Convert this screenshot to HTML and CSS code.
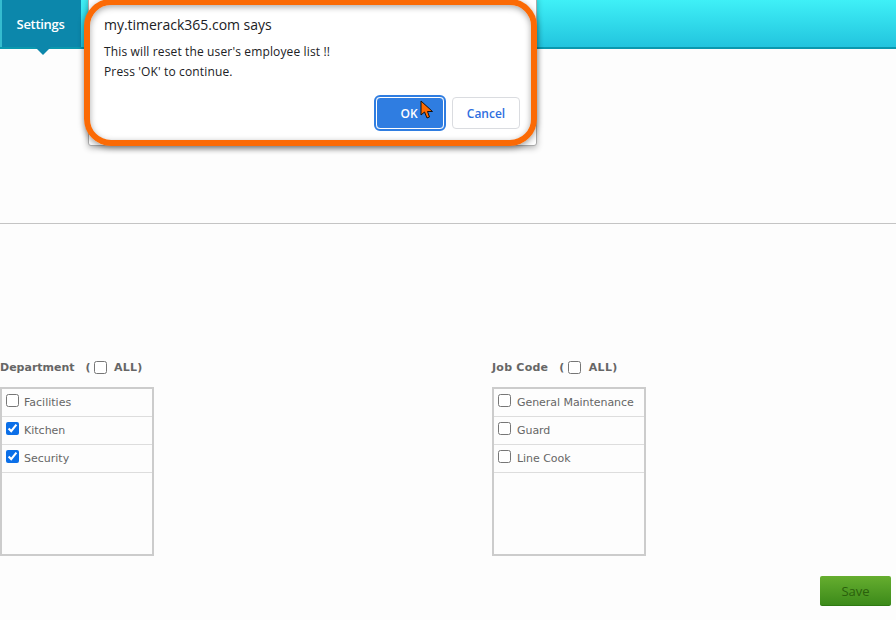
FILE: index.html
```html
<!DOCTYPE html>
<html lang="en">
<head>
<meta charset="utf-8">
<title>Settings</title>
<link rel="stylesheet" href="styles.css">
</head>
<body>
<header class="topbar">
  <div class="tab">Settings</div>
</header>
<main class="content">
  <div class="upper"></div>
  <hr class="rule">
  <div class="columns">
    <section class="col">
      <div class="col-head"><span class="col-name">Department</span><span class="all">(<input type="checkbox" class="cb">ALL)</span></div>
      <ul class="list">
        <li class="row"><input type="checkbox" class="cb"><span>Facilities</span></li>
        <li class="row"><input type="checkbox" class="cb" checked><span>Kitchen</span></li>
        <li class="row"><input type="checkbox" class="cb" checked><span>Security</span></li>
      </ul>
    </section>
    <section class="col">
      <div class="col-head"><span class="col-name">Job Code</span><span class="all">(<input type="checkbox" class="cb">ALL)</span></div>
      <ul class="list">
        <li class="row"><input type="checkbox" class="cb"><span>General Maintenance</span></li>
        <li class="row"><input type="checkbox" class="cb"><span>Guard</span></li>
        <li class="row"><input type="checkbox" class="cb"><span>Line Cook</span></li>
      </ul>
    </section>
  </div>
  <div class="actions"><button class="save">Save</button></div>
</main>
<div class="dialog">
  <div class="dialog-title">my.timerack365.com says</div>
  <p class="dialog-msg">This will reset the user's employee list !!<br>Press 'OK' to continue.</p>
  <div class="dialog-btns">
    <button class="btn btn-ok">OK</button>
    <button class="btn btn-cancel">Cancel</button>
  </div>
</div>
<div class="highlight"></div>
<svg class="cursor" width="14" height="20" viewBox="0 0 14 20"><path d="M1 1 L1 15 L4.5 12 L7 18 L9.5 17 L7.5 11.5 L12.5 11.5 Z" fill="#ff6a00" stroke="#111" stroke-width="1"/></svg>
</body>
</html>
```
FILE: styles.css
```css
* { box-sizing: border-box; }
html, body { margin: 0; height: 620px; overflow: hidden; }
body { background: #fdfdfd; font-family: "DejaVu Sans", sans-serif; position: relative; }
.topbar {
  height: 49px;
  background: linear-gradient(#3ff0f7, #22c4de);
  border-bottom: 2px solid #0a98ae;
  display: flex;
}
.tab {
  position: relative;
  width: 81px;
  height: 47px;
  padding: 14px 2px 0 0;
  background: #0c87ab;
  border-left: 2px solid #35bcd0;
  color: #fff;
  font: 600 13px/20px "Open Sans", sans-serif;
  text-align: center;
  letter-spacing: -0.3px;
}
.tab::after {
  content: "";
  position: absolute;
  left: 33px;
  top: 47px;
  border: 8px solid transparent;
  border-top-color: #0c87ab;
  border-bottom: 0;
}
.upper { height: 174px; }
.rule { margin: 0; border: 0; border-top: 1px solid #c4c4c4; }
.columns { display: grid; grid-template-columns: 492px 154px; padding-top: 133px; }
.col-head {
  height: 20px;
  display: flex;
  align-items: center;
  font-size: 11px;
  font-weight: 700;
  color: #666;
}
.col-name { margin-right: 11px; }
.all { display: flex; align-items: center; letter-spacing: 0.3px; font-size: 11px; }
.cb { width: 13px; height: 13px; margin: 0 14px 0 0; flex: none; accent-color: #0b6fe8; }
.all .cb { margin: 0 7px 0 3px; }
.col + .col .col-name { letter-spacing: 0.25px; }
.col + .col .all { letter-spacing: 0.35px; }
.col + .col .all .cb { margin-right: 8px; }
.list {
  list-style: none;
  margin: 10px 0 0;
  padding: 0;
  width: 154px;
  height: 169px;
  border: 2px solid #ccc;
  background: #fdfdfd;
}
.row {
  height: 28px;
  display: flex;
  align-items: center;
  padding: 0 0 1px 4px;
  border-bottom: 1px solid #ddd;
  font-size: 11px;
  color: #666;
}
.row .cb { margin-right: 5px; margin-top: -3px; }
.col + .col .row .cb { margin-right: 6px; }
.col + .col .row { letter-spacing: -0.05px; }
.actions { display: flex; justify-content: flex-end; padding: 20px 5px 0 0; }
.save {
  width: 71px;
  height: 30px;
  padding: 0;
  border: 0;
  border-radius: 2px;
  background: linear-gradient(#66ae2f, #3c8a1a);
  border-bottom: 1px solid #2f7a12;
  color: #2a600c;
  font: 13px "Open Sans", sans-serif;
}
.dialog {
  position: absolute;
  left: 88px;
  top: -4px;
  width: 449px;
  height: 150px;
  background: #fff;
  border: 1px solid #aaa;
  border-radius: 0 0 3px 3px;
  box-shadow: 0 2px 6px rgba(0,0,0,.3);
  padding: 18px 16px 0 15px;
  font-family: "Open Sans", sans-serif;
  color: #202124;
}
.dialog-title { font-size: 14px; line-height: 20px; letter-spacing: -0.02px; }
.dialog-msg { margin: 7px 0 0; font-size: 12px; line-height: 20px; letter-spacing: 0.14px; }
.dialog-btns { display: flex; justify-content: flex-end; gap: 8px; margin-top: 15px; }
.btn { height: 32px; border-radius: 4px; font: 600 12px "Open Sans", sans-serif; padding: 0; }
.btn-ok {
  width: 68px;
  padding-right: 2px;
  background: #2f7de1;
  color: #fff;
  border: 1px solid #fff;
  outline: 2px solid #2f7de1;
  outline-offset: 0;
}
.btn-cancel { width: 68px; background: #fff; color: #2f6fe0; border: 1px solid #dadce0; }
.highlight {
  position: absolute;
  left: 84px;
  top: -1px;
  width: 453px;
  height: 147px;
  border: 6px solid #fb6a05;
  border-radius: 27px;
  box-shadow: 0 2px 6px rgba(0,0,0,.4), inset 0 2px 6px rgba(0,0,0,.35);
}
.cursor { position: absolute; left: 420px; top: 100px; }
```
